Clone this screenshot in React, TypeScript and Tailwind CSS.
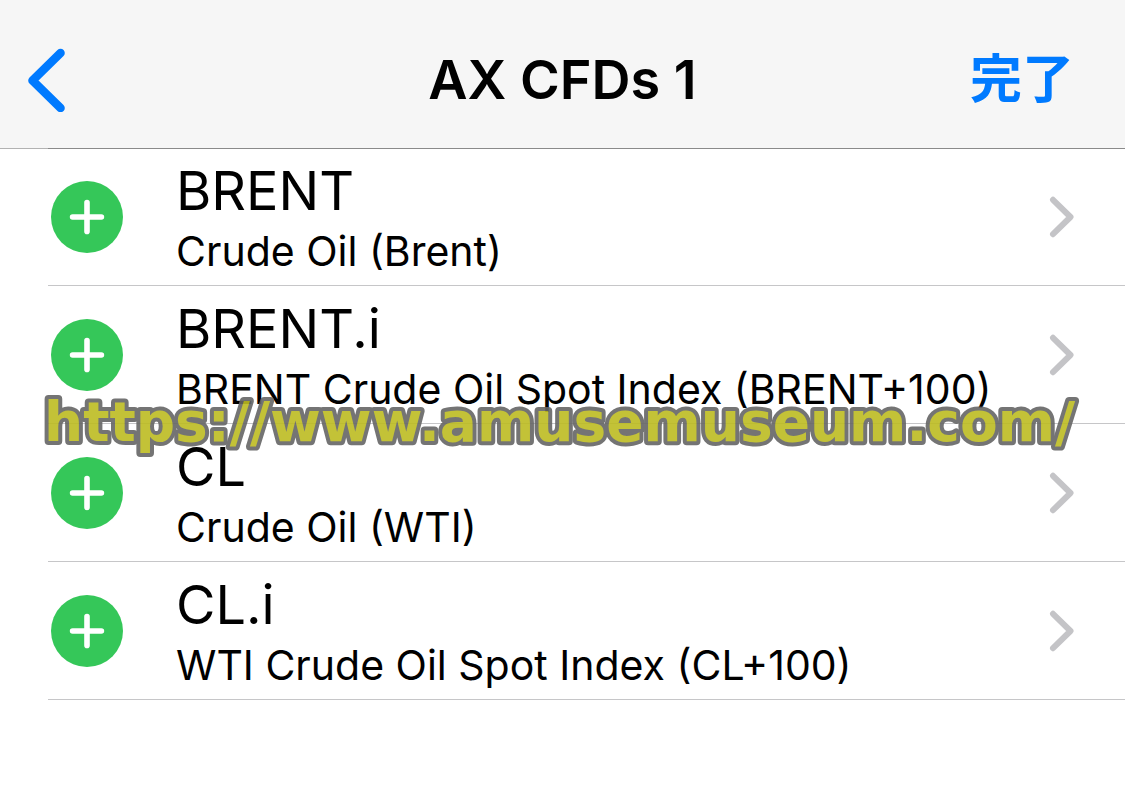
interface Instrument {
  symbol: string;
  description: string;
}

const instruments: Instrument[] = [
  { symbol: "BRENT", description: "Crude Oil (Brent)" },
  { symbol: "BRENT.i", description: "BRENT Crude Oil Spot Index (BRENT+100)" },
  { symbol: "CL", description: "Crude Oil (WTI)" },
  { symbol: "CL.i", description: "WTI Crude Oil Spot Index (CL+100)" },
];

const BackIcon = () => (
  <svg width="40" height="64" viewBox="0 0 40 64" fill="none" aria-hidden="true">
    <path
      d="M33.5 5L5.5 32.5L33.5 60"
      stroke="currentColor"
      strokeWidth="8.6"
      strokeLinecap="round"
      strokeLinejoin="round"
    />
  </svg>
);

const PlusIcon = () => (
  <svg width="36" height="36" viewBox="0 0 36 36" fill="none" aria-hidden="true">
    <path d="M18 3.6V32.4M3.6 18H32.4" stroke="currentColor" strokeWidth="5.6" strokeLinecap="round" />
  </svg>
);

const ChevronIcon = () => (
  <svg width="26" height="42" viewBox="0 0 26 42" fill="none" aria-hidden="true">
    <path
      d="M4 3.8L21.5 21L4 38.2"
      stroke="currentColor"
      strokeWidth="6"
      strokeLinecap="round"
      strokeLinejoin="round"
    />
  </svg>
);

const InstrumentRow = ({ symbol, description }: Instrument) => (
  <li className="flex items-center border-b border-[#c6c6c8] pr-[50px] pl-[3px]">
    <button
      type="button"
      aria-label={symbol}
      className="flex size-[72px] shrink-0 items-center justify-center rounded-full bg-[#35c759] text-white"
    >
      <PlusIcon />
    </button>
    <a href="#" className="ml-[53px] flex min-w-0 flex-1 items-center justify-between">
      <span className="flex flex-col pt-[9px] pb-2">
        <span className="text-[54px] leading-[68px]">{symbol}</span>
        <span className="text-[41px] leading-[52px]">{description}</span>
      </span>
      <span className="shrink-0 text-[#c4c4c7]">
        <ChevronIcon />
      </span>
    </a>
  </li>
);

const Watermark = () => (
  <svg
    className="pointer-events-none absolute top-[388px] left-[44px] h-[68px] w-full overflow-visible opacity-90"
  >
    <text
      x="0"
      y="53"
      fill="#bdbc22"
      stroke="#666666"
      strokeWidth="8"
      strokeLinejoin="round"
      className="text-[55px] font-bold [paint-order:stroke_fill] font-['DejaVu_Sans',sans-serif]"
    >
      https://www.amusemuseum.com/
    </text>
  </svg>
);

export default function App() {
  return (
    <div className="relative min-h-screen overflow-hidden bg-white font-[Inter,'Noto_Sans_CJK_JP',sans-serif] text-black">
      <header className="grid grid-cols-[1fr_auto_1fr] items-center border-b border-[#b2b2b2] bg-[#f6f6f6] px-[27px] pt-8 pb-5">
        <button type="button" aria-label="Back" className="justify-self-start text-[#007aff]">
          <BackIcon />
        </button>
        <h1 className="text-[54px] leading-[96px] font-semibold">AX CFDs 1</h1>
        <button
          type="button"
          className="justify-self-end pr-6 text-[52px] leading-[96px] font-bold text-[#007aff]"
        >
          完了
        </button>
      </header>
      <main>
        <ul className="relative -mt-px ml-12 shadow-[inset_0_1px_#8a8a8a]">
          {instruments.map((item) => (
            <InstrumentRow key={item.symbol} {...item} />
          ))}
        </ul>
      </main>
      <Watermark />
    </div>
  );
}
